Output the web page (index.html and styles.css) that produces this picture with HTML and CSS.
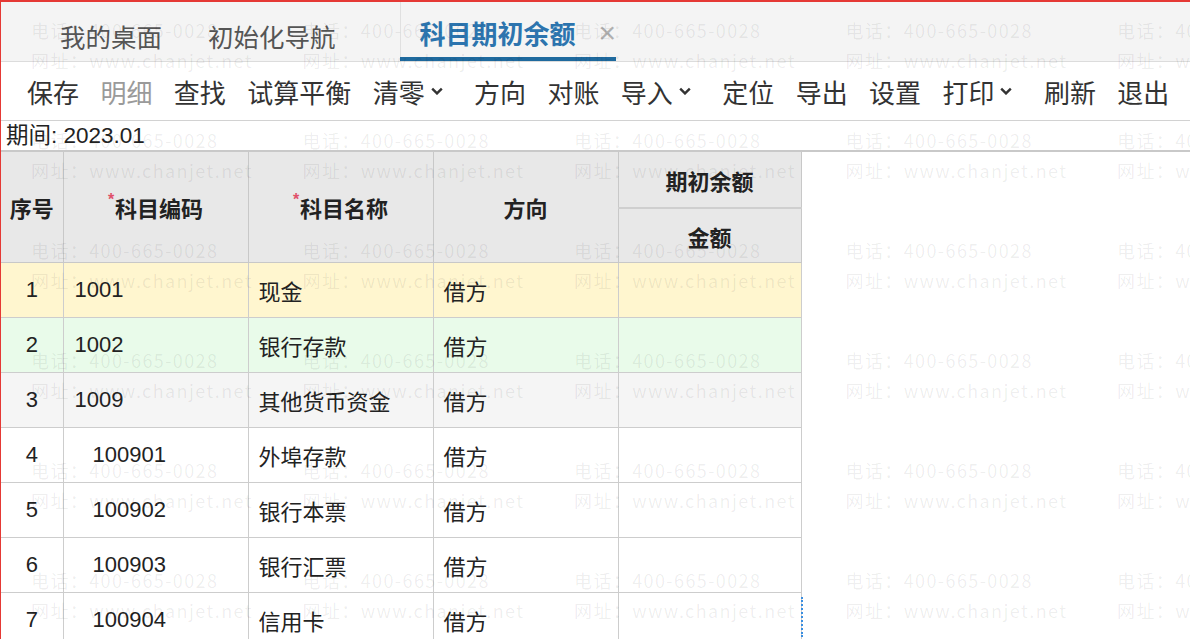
FILE: index.html
```html
<!DOCTYPE html>
<html lang="zh-CN">
<head>
    <meta charset="UTF-8">
    <title>科目期初余额</title>
    <link rel="stylesheet" href="styles.css">
</head>
<body>

<div class="page">
    <!-- 标签页 -->
    <div class="tabbar">
        <div class="tab">我的桌面</div>
        <div class="tab">初始化导航</div>
        <div class="tab active">科目期初余额<span class="close">×</span></div>
    </div>

    <!-- 工具栏 -->
    <div class="toolbar">
        <span class="tool">保存</span>
        <span class="tool disabled">明细</span>
        <span class="tool">查找</span>
        <span class="tool">试算平衡</span>
        <span class="tool">清零<svg class="caret" viewBox="0 0 10 6"><path d="M1 1l4 4 4-4"/></svg></span>
        <span class="tool">方向</span>
        <span class="tool">对账</span>
        <span class="tool">导入<svg class="caret" viewBox="0 0 10 6"><path d="M1 1l4 4 4-4"/></svg></span>
        <span class="tool">定位</span>
        <span class="tool">导出</span>
        <span class="tool">设置</span>
        <span class="tool">打印<svg class="caret" viewBox="0 0 10 6"><path d="M1 1l4 4 4-4"/></svg></span>
        <span class="tool">刷新</span>
        <span class="tool">退出</span>
    </div>

    <div class="period">期间: 2023.01</div>

    <div class="grid-wrap">
        <table class="grid">
            <colgroup>
                <col class="c-no">
                <col class="c-code">
                <col class="c-name">
                <col class="c-dir">
                <col class="c-amt">
            </colgroup>
            <thead>
                <tr>
                    <th rowspan="2">序号</th>
                    <th rowspan="2"><span class="req">*</span>科目编码</th>
                    <th rowspan="2"><span class="req">*</span>科目名称</th>
                    <th rowspan="2">方向</th>
                    <th class="group">期初余额</th>
                </tr>
                <tr>
                    <th class="sub">金额</th>
                </tr>
            </thead>
            <tbody>
                <tr class="row-current">
                    <td class="no">1</td><td>1001</td><td>现金</td><td>借方</td><td></td>
                </tr>
                <tr class="row-hover">
                    <td class="no">2</td><td>1002</td><td>银行存款</td><td>借方</td><td></td>
                </tr>
                <tr class="row-alt">
                    <td class="no">3</td><td>1009</td><td>其他货币资金</td><td>借方</td><td></td>
                </tr>
                <tr>
                    <td class="no">4</td><td class="child">100901</td><td>外埠存款</td><td>借方</td><td></td>
                </tr>
                <tr>
                    <td class="no">5</td><td class="child">100902</td><td>银行本票</td><td>借方</td><td></td>
                </tr>
                <tr>
                    <td class="no">6</td><td class="child">100903</td><td>银行汇票</td><td>借方</td><td></td>
                </tr>
                <tr>
                    <td class="no">7</td><td class="child">100904</td><td>信用卡</td><td>借方</td><td></td>
                </tr>
            </tbody>
        </table>
        <div class="scroll-mark"></div>
    </div>

    <!-- 水印 -->
    <div class="watermark" id="watermark"></div>
</div>

<script>
    // 生成水印
    const wm = document.getElementById('watermark');
    for (let i = 0; i < 30; i++) {
        const cell = document.createElement('div');
        cell.className = 'wm-cell';
        cell.innerHTML = '<div>电话：400-665-0028</div><div>网址：www.chanjet.net</div>';
        wm.appendChild(cell);
    }
</script>

</body>
</html>
```

FILE: styles.css
```css
body {
    margin: 0;
    padding: 0;
    background-color: #fff;
    font-family: "Liberation Sans", "Noto Sans CJK SC", sans-serif;
    color: #222;
    overflow: hidden;
}
.page {
    position: relative;
    height: 639px;
    border-top: 2px solid #e53935;
    border-left: 1px solid #e53935;
    box-sizing: border-box;
    overflow: hidden;
}

/* 标签页 */
.tabbar {
    display: flex;
    height: 60px;
    padding-left: 59px;
    background-color: #f4f4f4;
    border-bottom: 1px solid #dcdcdc;
    box-sizing: border-box;
}
.tab {
    display: flex;
    align-items: center;
    font-size: 25.5px;
    color: #555;
    margin-right: 46px;
    padding-top: 8px;
    white-space: nowrap;
}
.tab:nth-child(2) {
    margin-right: 64px;
}
.tab.active {
    color: #2c74ae;
    font-weight: bold;
    font-size: 26px;
    padding-left: 20px;
    padding-right: 0;
    border-bottom: 4px solid #1f6a9e;
    box-shadow: inset 1px 0 0 #e0e0e0;
    padding-top: 6px;
}
.tab .close {
    font-weight: normal;
    color: #b0b0b0;
    font-size: 30px;
    margin-left: 23px;
}

/* 工具栏 */
.toolbar {
    display: flex;
    align-items: center;
    height: 59px;
    padding-left: 26px;
    border-bottom: 1px solid #d2d2d2;
    box-sizing: border-box;
    overflow: hidden;
}
.tool {
    display: flex;
    align-items: center;
    flex-shrink: 0;
    white-space: nowrap;
    font-size: 26px;
    color: #333;
    margin-right: 21.4px;
}
.tool.disabled {
    color: #9a9a9a;
}
.caret {
    width: 12px;
    height: 8px;
    margin-left: 6px;
    margin-right: 10px;
    fill: none;
    stroke: #333;
    stroke-width: 2;
}

.period {
    height: 29px;
    line-height: 29px;
    font-size: 22.5px;
    padding-left: 5px;
    color: #222;
}

/* 表格 */
.grid-wrap {
    position: relative;
    border-top: 2px solid #c9c9c9;
}
.grid {
    width: 800px;
    border-collapse: collapse;
    table-layout: fixed;
    font-size: 22px;
}
.c-no { width: 62px; }
.c-code, .c-name, .c-dir { width: 185px; }
.c-amt { width: 183px; }
.grid th {
    background-color: #e8e8e8;
    border: 1px solid #c8c8c8;
    border-top: none;
    font-weight: bold;
    font-size: 22px;
    color: #222;
    height: 110px;
    padding: 0;
}
.grid th:first-child,
.grid td:first-child {
    border-left: none;
}
.grid th.group {
    height: 55px;
    border-bottom: 2px solid #cfcfcf;
}
.grid th.sub {
    height: 53px;
}
.req {
    color: #e0506a;
    font-size: 16px;
    vertical-align: top;
    margin-right: 1px;
}
.grid td {
    height: 54px;
    border: 1px solid #cdcdcd;
    padding: 0 10px;
    color: #222;
    white-space: nowrap;
}
.grid td:nth-child(2) {
    padding-left: 11px;
}
.grid td.child {
    padding-left: 29px;
}
.grid td.no {
    text-align: center;
    padding: 0;
}
.row-current td {
    background-color: #fff6cf;
}
.row-hover td {
    background-color: #e9fbea;
}
.row-alt td {
    background-color: #f5f5f5;
}
.scroll-mark {
    position: absolute;
    left: 800px;
    top: 445px;
    height: 40px;
    border-left: 2px dotted #3a8ee0;
}

/* 水印 */
.watermark {
    position: absolute;
    left: 30px;
    top: 13px;
    display: grid;
    grid-template-columns: repeat(5, 271.5px);
    grid-auto-rows: 110px;
    pointer-events: none;
}
.wm-cell {
    font-family: "Noto Sans CJK SC", sans-serif;
    font-size: 18px;
    line-height: 30px;
    color: rgba(0, 0, 0, 0.07);
    letter-spacing: 1.4px;
    white-space: nowrap;
}
```
